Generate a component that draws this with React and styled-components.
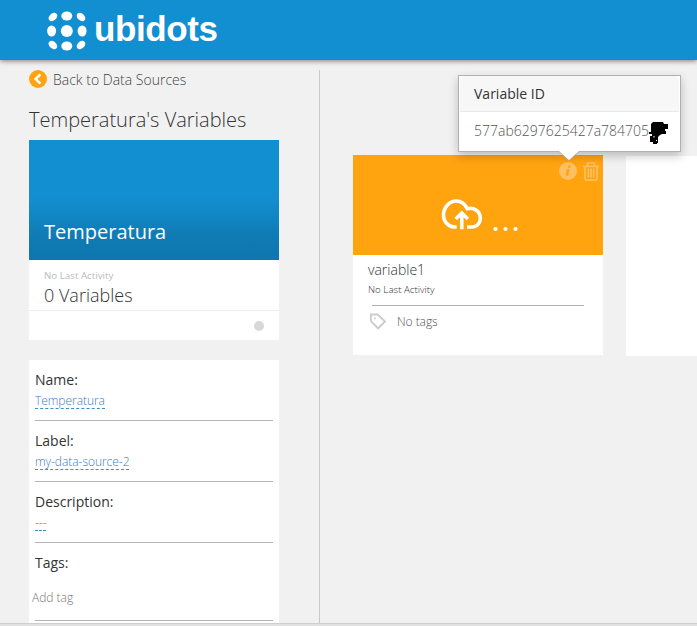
import React from "react";
import styled, { createGlobalStyle } from "styled-components";

const GlobalStyle = createGlobalStyle`
  * { box-sizing: border-box; }
  html, body { margin: 0; padding: 0; overflow: hidden; background: #f1f1f1; }
  body { font-family: "Open Sans", "Noto Sans", sans-serif; font-weight: 300; color: #333; }
  svg { display: block; flex: none; }
`;

const Page = styled.div`
  display: flex;
  flex-direction: column;
  height: 626px;
  overflow: hidden;
  background: #f1f1f1;
`;

const Header = styled.header`
  display: flex;
  align-items: flex-start;
  flex: 0 0 60px;
  padding: 11px 0 0 47px;
  background: #128fd0;
  box-shadow: 0 1px 5px rgba(0, 0, 0, 0.5);
`;

const Wordmark = styled.span`
  margin: -2px 0 0 7px;
  font: bold 35px/40px "Liberation Sans", Arial, sans-serif;
  letter-spacing: -0.4px;
  color: #fff;
  white-space: nowrap;
`;

const Main = styled.main`
  display: flex;
  flex: 1;
  min-height: 0;
  padding-top: 10px;
`;

const Sidebar = styled.aside`
  flex: 0 0 320px;
  padding-left: 29px;
  border-right: 1px solid #c8c8c8;
  overflow: hidden;
`;

const BackLink = styled.a`
  display: flex;
  align-items: center;
  gap: 6px;
  height: 18px;
  font-size: 14px;
  color: #444;
`;

const Title = styled.h1`
  margin: 18px 0 0;
  height: 34px;
  font-size: 20px;
  line-height: 27px;
  font-weight: 300;
  color: #333;
  white-space: nowrap;
`;

const SourceCard = styled.section`
  width: 250px;
  height: 200px;
  background: #fff;
`;

const SourceBanner = styled.div`
  display: flex;
  align-items: flex-end;
  height: 120px;
  padding: 0 15px 14px;
  background: linear-gradient(#128fd0 0%, #128fd0 48%, #0f7ab3 82%, #0f76ae 100%);
  color: #fff;
  font-size: 20px;
  line-height: 28px;
  font-weight: 400;
`;

const SourceInfo = styled.div`
  height: 51px;
  padding: 9px 15px 0;
  border-bottom: 1px solid #eee;
`;

const Activity = styled.div`
  font-size: ${(p) => p.$size};
  line-height: 13px;
  font-weight: ${(p) => p.$weight || 300};
  color: ${(p) => p.$color};
`;

const VariableCount = styled.div`
  font-size: 18px;
  line-height: 27px;
  color: #333;
`;

const SourceFooter = styled.div`
  display: flex;
  justify-content: flex-end;
  padding: 10px 15px;
`;

const StatusDot = styled.i`
  width: 10px;
  height: 10px;
  border-radius: 50%;
  background: #d8d8d8;
`;

const Details = styled.section`
  width: 250px;
  height: 300px;
  margin-top: 20px;
  padding: 0 6px;
  background: #fff;
`;

const Field = styled.div`
  display: flex;
  flex-direction: column;
  align-items: flex-start;
  height: ${(p) => p.$height || "61px"};
  padding-top: 10px;
  border-bottom: 1px solid #b5b5b5;
`;

const FieldLabel = styled.span`
  font-size: 14px;
  line-height: 20px;
  font-weight: 400;
  color: #333;
`;

const FieldValue = styled.a`
  height: 17px;
  margin-top: 2px;
  font-size: 12px;
  line-height: 18px;
  letter-spacing: -0.04px;
  color: #3a7cc4;
  border-bottom: 1px dashed #3b8ccc;
`;

const AddTag = styled.span`
  margin: 16px 0 0 -3px;
  font-size: 12px;
  line-height: 18px;
  color: #777;
`;

const Board = styled.div`
  display: flex;
  flex: 1;
  gap: 23px;
  min-width: 0;
  padding: 85px 0 0 33px;
  overflow: hidden;
`;

const VariableCard = styled.article`
  position: relative;
  flex: 0 0 250px;
  height: 200px;
  margin-top: ${(p) => p.$offset || "0"};
  background: #fff;
`;

const VariableBanner = styled.div`
  display: flex;
  flex-direction: column;
  height: 100px;
  background: #ffa30f;
`;

const Actions = styled.div`
  display: flex;
  justify-content: flex-end;
  align-items: center;
  gap: 6px;
  height: 20px;
  margin: 6px 4px 0 0;
`;

const Uploading = styled.div`
  display: flex;
  align-items: flex-end;
  gap: 11px;
  margin: 18px 0 0 88px;
`;

const EllipsisIcon = styled.svg`
  margin-bottom: -2px;
`;

const VariableInfo = styled.div`
  padding: 4px 15px 0;
`;

const VariableName = styled.div`
  height: 24px;
  font-size: 14px;
  line-height: 22px;
  color: #333;
`;

const TagRow = styled.div`
  display: flex;
  align-items: center;
  gap: 10px;
  width: 212px;
  height: 32px;
  margin: 9px 0 0 4px;
  border-top: 1px solid #b0b0b0;
  font-size: 12px;
  letter-spacing: -0.05px;
  color: #555;
  svg { margin-left: -3px; }
`;

const Popover = styled.div`
  position: absolute;
  z-index: 2;
  left: 105px;
  top: -80px;
  width: 223px;
  height: 77px;
  border: 1px solid #b0b0b0;
  background: #fff;
  box-shadow: 0 4px 9px rgba(0, 0, 0, 0.22);
`;

const PopoverTitle = styled.div`
  height: 36px;
  margin: 0 1px;
  padding: 7px 14px 0;
  border-bottom: 1px solid #e9e9e9;
  border-radius: 5px 5px 0 0;
  background: #f7f7f7;
  font-size: 14px;
  line-height: 21px;
  font-weight: 400;
  color: #333;
`;

const PopoverBody = styled.div`
  padding: 8px 0 0 15px;
  font-size: 14px;
  line-height: 21px;
  color: #555;
  white-space: nowrap;
`;

const Scribble = styled.svg`
  position: absolute;
  left: 190px;
  top: 45px;
`;

const PopoverArrow = styled.svg`
  position: absolute;
  left: 99px;
  top: 75px;
`;

const BottomBar = styled.footer`
  flex: 0 0 3px;
  border-top: 1px solid #cfcfcf;
  background: #e1e1e1;
`;

const LogoMark = () => (
  <svg width="40" height="40" viewBox="0 0 40 40" fill="#fff">
    <ellipse cx="19.8" cy="5" rx="5.5" ry="4.5" />
    <ellipse cx="19.8" cy="35" rx="5.5" ry="4.5" />
    <ellipse cx="4.6" cy="20" rx="4.5" ry="5.5" />
    <ellipse cx="35.1" cy="20" rx="4.5" ry="5.5" />
    <circle cx="19.8" cy="20" r="6" />
    <ellipse cx="5.9" cy="6" rx="4.9" ry="3.5" transform="rotate(-42 5.9 6)" />
    <ellipse cx="34" cy="6" rx="4.9" ry="3.5" transform="rotate(42 34 6)" />
    <ellipse cx="5.9" cy="34" rx="4.9" ry="3.5" transform="rotate(42 5.9 34)" />
    <ellipse cx="34" cy="34" rx="4.9" ry="3.5" transform="rotate(-42 34 34)" />
  </svg>
);

const BackIcon = () => (
  <svg width="18" height="18" viewBox="0 0 18 18">
    <circle cx="9" cy="9" r="9" fill="#ffa30f" />
    <path d="M11.4 4.3 6.6 9l4.8 4.7" fill="none" stroke="#fff" strokeWidth="2.5" />
  </svg>
);

const InfoIcon = () => (
  <svg width="18" height="18" viewBox="0 0 18 18">
    <circle cx="9" cy="9" r="9" fill="#ffc061" />
    <circle cx="10.3" cy="4.8" r="1.3" fill="#ffa30f" />
    <path d="M7 7.5 10.6 7 9.1 12.4l1.1-.5.2.5q-1.5 1.6-3 1.3-1-.2-.7-1.5L7.8 8.3H7z" fill="#ffa30f" />
  </svg>
);

const TrashIcon = () => (
  <svg width="16" height="19" viewBox="0 0 16 19" fill="none" stroke="#ffc061" strokeWidth="1.7">
    <path d="M4.5 4V1h7v3M0 4.4h16M2 4.5v11.7q0 2 2 2h8q2 0 2-2V4.5M5.3 6.5v9M8 6.5v9M10.7 6.5v9" />
  </svg>
);

const CloudIcon = () => (
  <svg width="41" height="31" viewBox="-0.5 0 41 31" fill="none" stroke="#fff" strokeWidth="3.5">
    <path d="M15.2 28H12C5.8 27 2 22 2 16 2 8.5 7.8 2.1 14.5 2.1c5.5 0 9.3 3.2 11.3 7.7 6.8-1.8 13 2.5 13 9.3 0 5-3.4 8.9-8 8.9h-5.2" />
    <path d="M20.3 30.2V14.2M14.2 20l6.1-6 6.1 6" />
  </svg>
);

const Dots = () => (
  <EllipsisIcon width="26" height="6" viewBox="0 0 26 6" fill="#fff">
    <circle cx="2.5" cy="3" r="2.1" />
    <circle cx="12.5" cy="3" r="2.1" />
    <circle cx="22.5" cy="3" r="2.1" />
  </EllipsisIcon>
);

const TagIcon = () => (
  <svg width="18" height="17" viewBox="0 0 18 17">
    <path d="M1.9 1.5h6.7l7.4 7-6.9 6.8-7.2-7.2z" fill="none" stroke="#ccc" strokeWidth="1.9" />
    <circle cx="5.9" cy="5.3" r="1" fill="#ccc" />
  </svg>
);

const fields = [
  { label: "Name:", value: "Temperatura" },
  { label: "Label:", value: "my-data-source-2" },
  { label: "Description:", value: "---" },
];

const VariableIdPopover = () => (
  <Popover>
    <PopoverTitle>Variable ID</PopoverTitle>
    <PopoverBody>577ab6297625427a784705</PopoverBody>
    <Scribble width="22" height="25" viewBox="0 0 22 25">
      <path d="M2 3 4 1h10l1 2h4v5h-3v2h1v3h-4l-2 1-2 2v6h-1v1H4v-2H1v-6h2v-2H0v-2h2z" fill="#000" />
      <path d="M5 15v1.5M7 19.5h1" stroke="#fff" strokeWidth="1" />
    </Scribble>
    <PopoverArrow width="22" height="10" viewBox="0 0 22 10">
      <path d="M0 0h22L11 10z" fill="#aaa" />
      <path d="M1 0h20L11 9z" fill="#fff" />
    </PopoverArrow>
  </Popover>
);

export default function App() {
  return (
    <Page>
      <GlobalStyle />
      <Header>
        <LogoMark />
        <Wordmark>ubidots</Wordmark>
      </Header>
      <Main>
        <Sidebar>
          <BackLink><BackIcon />Back to Data Sources</BackLink>
          <Title>Temperatura's Variables</Title>
          <SourceCard>
            <SourceBanner>Temperatura</SourceBanner>
            <SourceInfo>
              <Activity $size="9.75px" $weight={400} $color="#bbb">No Last Activity</Activity>
              <VariableCount>0 Variables</VariableCount>
            </SourceInfo>
            <SourceFooter><StatusDot /></SourceFooter>
          </SourceCard>
          <Details>
            {fields.map((f) => (
              <Field key={f.label}>
                <FieldLabel>{f.label}</FieldLabel>
                <FieldValue>{f.value}</FieldValue>
              </Field>
            ))}
            <Field $height="78px">
              <FieldLabel>Tags:</FieldLabel>
              <AddTag>Add tag</AddTag>
            </Field>
          </Details>
        </Sidebar>
        <Board>
          <VariableCard>
            <VariableBanner>
              <Actions><InfoIcon /><TrashIcon /></Actions>
              <Uploading><CloudIcon /><Dots /></Uploading>
            </VariableBanner>
            <VariableInfo>
              <VariableName>variable1</VariableName>
              <Activity $size="9.8px" $color="#333">No Last Activity</Activity>
              <TagRow><TagIcon />No tags</TagRow>
            </VariableInfo>
            <VariableIdPopover />
          </VariableCard>
          <VariableCard $offset="1px" />
        </Board>
      </Main>
      <BottomBar />
    </Page>
  );
}
